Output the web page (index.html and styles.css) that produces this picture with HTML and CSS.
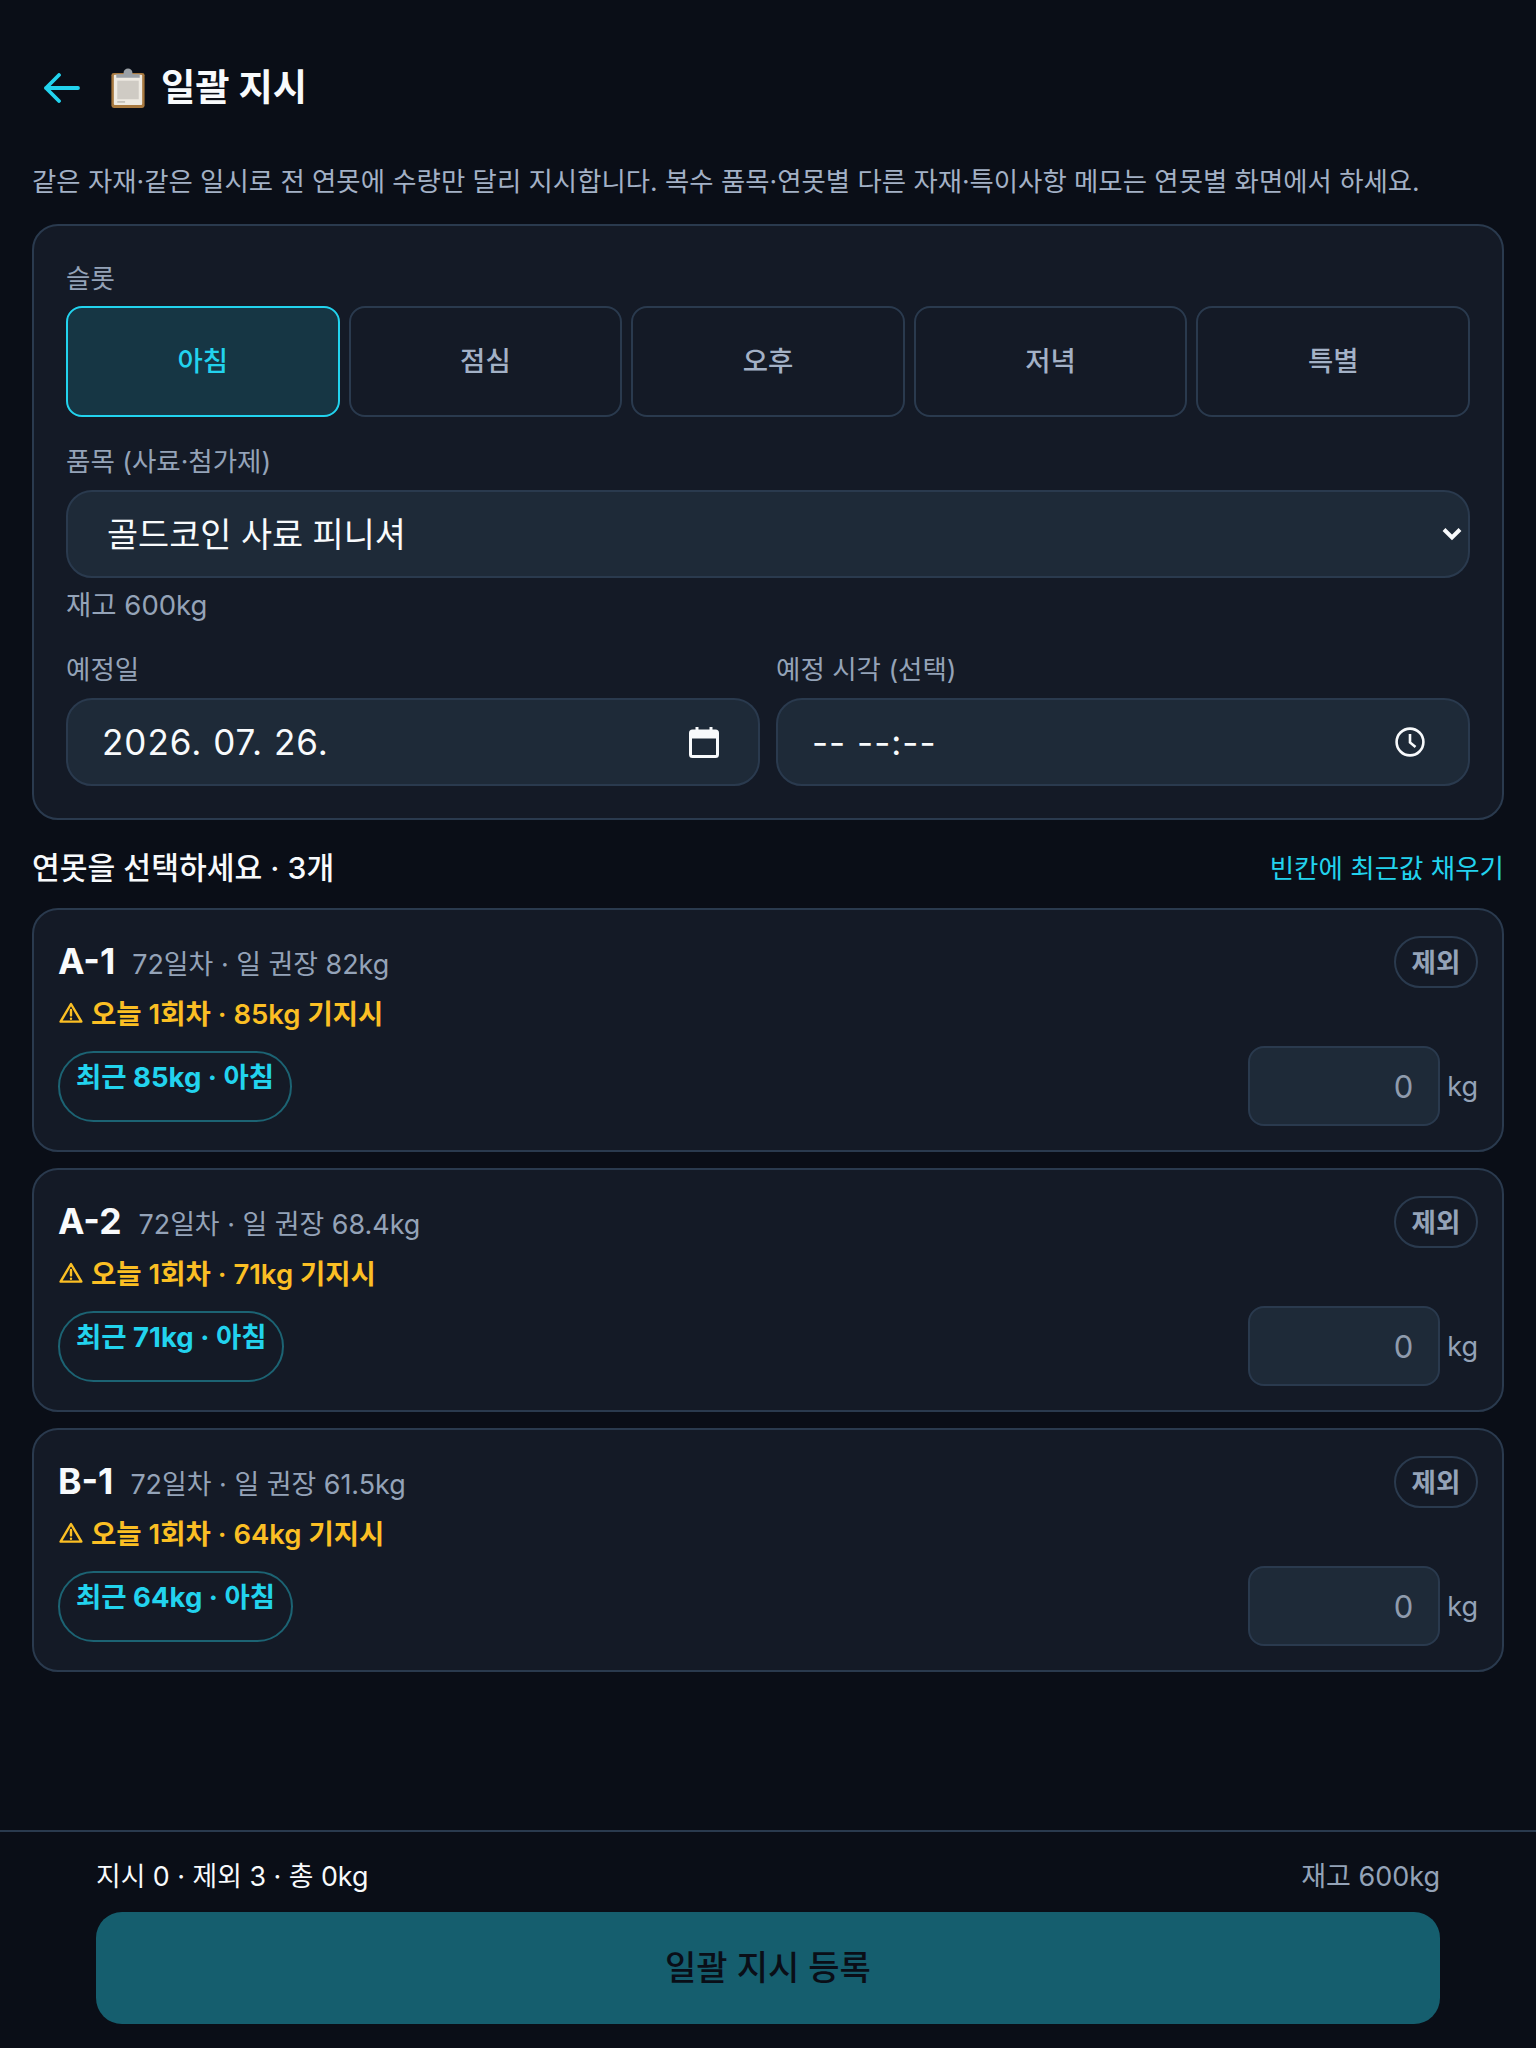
FILE: index.html
```html
<!DOCTYPE html>
<html lang="ko">
<head>
<meta charset="utf-8">
<title>일괄 지시</title>
<link rel="stylesheet" href="styles.css">
</head>
<body>
<div class="page">
  <main class="main">
    <header class="header">
      <svg class="back" viewBox="0 0 36 30" fill="none" stroke="currentColor" stroke-width="3.8" stroke-linecap="round" stroke-linejoin="round"><path d="M34 15H2M15 2 2 15l13 13"/></svg>
      <h1 class="title">
        <svg class="clip" viewBox="0 0 36 42">
          <rect x="1" y="5" width="34" height="36" rx="2.5" fill="#a8793f"/>
          <rect x="3.5" y="7" width="29" height="31" rx="1" fill="#eeeae2"/>
          <rect x="7" y="13" width="22" height="19" fill="#cfcbc4"/>
          <rect x="7" y="34" width="8" height="1.5" fill="#bdb9b2"/>
          <path d="M6 10V6.5h7.5V4.5a4.5 4 0 0 1 9 0v2H30V10z" fill="#9aa0a6"/>
        </svg>
        <span>일괄 지시</span>
      </h1>
    </header>
    <p class="desc">같은 자재·같은 일시로 전 연못에 수량만 달리 지시합니다. 복수 품목·연못별 다른 자재·특이사항 메모는 연못별 화면에서 하세요.</p>

    <section class="card form">
      <div class="label label-slot">슬롯</div>
      <div class="slots">
        <button class="slot slot-on">아침</button>
        <button class="slot">점심</button>
        <button class="slot">오후</button>
        <button class="slot">저녁</button>
        <button class="slot">특별</button>
      </div>
      <div class="label label-item">품목 (사료·첨가제)</div>
      <div class="field field-select">
        <span>골드코인 사료 피니셔</span>
        <svg class="chev" viewBox="0 0 20 14" fill="none" stroke="currentColor" stroke-width="4"><path d="M2 2.5l8 8 8-8"/></svg>
      </div>
      <div class="stock">재고 600kg</div>
      <div class="dates">
        <div class="date-col">
          <div class="label">예정일</div>
          <div class="field field-date field-day">
            <span>2026. 07. 26.</span>
            <svg class="dicon" viewBox="0 0 30 32" fill="none" stroke="currentColor" stroke-width="3"><rect x="1.5" y="5" width="27" height="25.5" rx="2"/><path d="M1.5 9h27" stroke-width="7"/><path d="M8 1v5M22 1v5"/></svg>
          </div>
        </div>
        <div class="date-col">
          <div class="label">예정 시각 (선택)</div>
          <div class="field field-date field-time">
            <span>-- --:--</span>
            <svg class="dicon" viewBox="0 0 30 30" fill="none" stroke="currentColor" stroke-width="2.6"><circle cx="15" cy="15" r="13.4"/><path d="M15 7v8.5l5.5 4.5"/></svg>
          </div>
        </div>
      </div>
    </section>

    <div class="section-head">
      <h2 class="section-title">연못을 선택하세요 · 3개</h2>
      <a class="fill-link">빈칸에 최근값 채우기</a>
    </div>

    <div class="ponds">
      <article class="card pond">
        <div class="pond-top">
          <div class="pond-id"><strong>A-1</strong><span>72일차 · 일 권장 82kg</span></div>
          <button class="exclude">제외</button>
        </div>
        <div class="warn">
          <svg viewBox="0 0 24 21" fill="none" stroke="currentColor" stroke-width="2.4" stroke-linejoin="round" stroke-linecap="round"><path d="M12 2 1.6 19.6h20.8z"/><path d="M12 8v5.4M12 16.6v.1"/></svg>
          <span>오늘 1회차 · 85kg 기지시</span>
        </div>
        <div class="pond-bottom">
          <button class="recent">최근 85kg · 아침</button>
          <div class="qty"><div class="qty-input">0</div><span class="unit">kg</span></div>
        </div>
      </article>
      <article class="card pond">
        <div class="pond-top">
          <div class="pond-id"><strong>A-2</strong><span>72일차 · 일 권장 68.4kg</span></div>
          <button class="exclude">제외</button>
        </div>
        <div class="warn">
          <svg viewBox="0 0 24 21" fill="none" stroke="currentColor" stroke-width="2.4" stroke-linejoin="round" stroke-linecap="round"><path d="M12 2 1.6 19.6h20.8z"/><path d="M12 8v5.4M12 16.6v.1"/></svg>
          <span>오늘 1회차 · 71kg 기지시</span>
        </div>
        <div class="pond-bottom">
          <button class="recent">최근 71kg · 아침</button>
          <div class="qty"><div class="qty-input">0</div><span class="unit">kg</span></div>
        </div>
      </article>
      <article class="card pond">
        <div class="pond-top">
          <div class="pond-id"><strong>B-1</strong><span>72일차 · 일 권장 61.5kg</span></div>
          <button class="exclude">제외</button>
        </div>
        <div class="warn">
          <svg viewBox="0 0 24 21" fill="none" stroke="currentColor" stroke-width="2.4" stroke-linejoin="round" stroke-linecap="round"><path d="M12 2 1.6 19.6h20.8z"/><path d="M12 8v5.4M12 16.6v.1"/></svg>
          <span>오늘 1회차 · 64kg 기지시</span>
        </div>
        <div class="pond-bottom">
          <button class="recent">최근 64kg · 아침</button>
          <div class="qty"><div class="qty-input">0</div><span class="unit">kg</span></div>
        </div>
      </article>
    </div>
  </main>

  <footer class="footer">
    <div class="footer-row">
      <span class="summary">지시 0 · 제외 3 · 총 0kg</span>
      <span class="footer-stock">재고 600kg</span>
    </div>
    <button class="submit">일괄 지시 등록</button>
  </footer>
</div>
</body>
</html>
```

FILE: styles.css
```css
* { box-sizing: border-box; }
html, body { margin: 0; padding: 0; }
body {
  background: #0a0e17;
  color: #f8fafc;
  font-family: Inter, "Noto Sans CJK KR", "Noto Sans", sans-serif;
}
button { font-family: inherit; cursor: pointer; }
.page { min-height: 2048px; display: flex; flex-direction: column; }
.main { flex: 1; padding: 0 32px; }

.header { display: flex; align-items: center; height: 60px; margin-top: 58px; padding-left: 12px; gap: 30px; color: #22d3ee; }
.back { width: 36px; height: 30px; flex: none; }
.title { margin: 0; display: flex; align-items: center; gap: 15px; font-size: 37.3px; font-weight: 700; color: #f8fafc; line-height: 60px; }
.clip { width: 36px; height: 41px; flex: none; }

.desc { margin: 45px 0 0; font-size: 26.4px; line-height: 37px; color: #a3b1c6; white-space: nowrap; }

.card { background: #141a26; border: 2px solid #2a3a4e; border-radius: 26px; }
.form { margin-top: 24px; padding: 32px; height: 596px; }
.label { font-size: 26.5px; line-height: 36px; color: #94a3b8; }
.label-slot { margin-top: 2px; margin-bottom: 10px; height: 36px; }
.label-item { margin-top: 26px; margin-bottom: 11px; height: 36px; }

.slots { display: grid; grid-template-columns: repeat(5, 1fr); gap: 9px; }
.slot { height: 111px; background: transparent; border: 2px solid #2a3a4e; border-radius: 16px; color: #a3b1c6; font-size: 27.5px; font-weight: 500; padding: 0 0 6px; }
.slot-on { background: #163644; border-color: #22d3ee; color: #22d3ee; }

.field { display: flex; align-items: center; justify-content: space-between; height: 88px; background: #1e2a38; border: 2px solid #2a3a4e; border-radius: 26px; color: #f8fafc; }
.field-select { padding: 0 6px 0 39px; font-size: 33.8px; }
.field-select span { padding-bottom: 4px; }
.chev { width: 20px; height: 14px; flex: none; }
.stock { margin-top: 9px; font-size: 27.5px; line-height: 36px; color: #94a3b8; }
.dates { display: grid; grid-template-columns: 1fr 1fr; gap: 16px; margin-top: 28px; }
.date-col .label { margin-bottom: 11px; height: 36px; }
.field-date { font-size: 35px; letter-spacing: 1px; }
.field-day { padding: 0 39px 0 34px; }
.field-time { padding: 0 43px 0 34px; }
.dicon { width: 30px; height: 32px; flex: none; }

.section-head { display: flex; align-items: center; justify-content: space-between; height: 44px; margin-top: 24px; }
.section-title { margin: 0; font-size: 30.2px; font-weight: 500; color: #f8fafc; }
.fill-link { font-size: 26.5px; color: #22d3ee; }

.ponds { display: flex; flex-direction: column; gap: 16px; margin-top: 20px; }
.pond { height: 244px; padding: 26px 24px 0; }
.pond-top { display: flex; align-items: flex-start; justify-content: space-between; height: 52px; }
.pond-id { display: flex; align-items: baseline; gap: 17px; margin-top: 4px; }
.pond-id strong { font-size: 35.5px; font-weight: 700; color: #f8fafc; }
.pond-id span { font-size: 26.9px; color: #94a3b8; }
.exclude { width: 84px; height: 52px; background: transparent; border: 2px solid #2a3a4e; border-radius: 26px; color: #94a3b8; font-size: 26.5px; font-weight: 700; padding: 0 0 4px; }
.warn { display: flex; align-items: center; gap: 8px; height: 36px; margin-top: 6px; font-size: 27.5px; font-weight: 600; color: #fbbf24; }
.warn svg { width: 24px; height: 21px; flex: none; margin-left: 1px; }
.pond-bottom { display: flex; justify-content: space-between; align-items: flex-start; margin-top: 20px; }
.recent { height: 71px; padding: 0 16px 20px; margin-top: 1px; background: transparent; border: 2px solid #1c6373; border-radius: 36px; color: #22d3ee; font-size: 27.5px; font-weight: 700; line-height: 36px; }
.qty { display: flex; align-items: center; gap: 7px; margin-top: -4px; }
.qty-input { width: 192px; height: 80px; display: flex; align-items: center; justify-content: flex-end; padding-right: 25px; background: #1e2a38; border: 2px solid #2a3a4e; border-radius: 16px; color: #8f9bad; font-size: 31px; }
.unit { font-size: 27px; color: #94a3b8; }

.footer { margin-top: auto; height: 218px; background: #0a0e17; border-top: 2px solid #2a3a4e; padding: 22px 96px 0; }
.footer-row { display: flex; justify-content: space-between; align-items: center; height: 40px; }
.summary { font-size: 26.8px; color: #f8fafc; }
.footer-stock { font-size: 27px; color: #94a3b8; }
.submit { display: block; width: 100%; height: 112px; margin-top: 18px; padding: 0 0 6px; background: #155e6e; border: 0; border-radius: 26px; color: #0a0e17; font-size: 34px; font-weight: 500; }
```
